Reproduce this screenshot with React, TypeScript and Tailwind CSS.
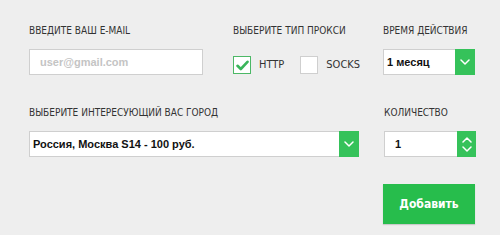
import React from 'react'

const label = "text-[10px] leading-none uppercase text-[#333] whitespace-nowrap"
const narrow = { fontFamily: '"Liberation Sans Narrow", "DejaVu Sans Condensed", sans-serif' }
const arial = { fontFamily: '"Liberation Sans", Arial, sans-serif' }

function Chevron({ up = false }: { up?: boolean }) {
  return (
    <svg width="10" height="6" viewBox="0 0 10 6" fill="none">
      <path d={up ? 'M1 5L5 1L9 5' : 'M1 1L5 5L9 1'} stroke="white" strokeWidth="1.5" strokeLinecap="round" strokeLinejoin="round" />
    </svg>
  )
}

function Select({ value, width }: { value: string; width: string }) {
  return (
    <div className={`${width} h-[26px] flex bg-white border border-[#cfcfcf]`}>
      <div className="flex-1 flex items-center pl-[3px] text-[11px] font-bold text-[#111]" style={arial}>
        {value}
      </div>
      <div className="w-[20px] -my-px -mr-px bg-[#35c25a] flex items-center justify-center">
        <Chevron />
      </div>
    </div>
  )
}

function Checkbox({ checked, text }: { checked: boolean; text: string }) {
  return (
    <div className="flex items-center">
      <div className={`w-[18px] h-[18px] bg-white border flex items-center justify-center ${checked ? 'border-[#4cb866]' : 'border-[#cfcfcf]'}`}>
        {checked && (
          <svg width="13" height="11" viewBox="0 0 13 11">
            <path d="M1.5 5.8L4.8 9L11.5 1.8" stroke="#3ab55a" strokeWidth="2.6" fill="none" strokeLinecap="round" strokeLinejoin="round" />
          </svg>
        )}
      </div>
      <span className="ml-[8px] text-[11px] text-[#333]" style={narrow}>{text}</span>
    </div>
  )
}

export default function App() {
  return (
    <div className="w-[500px] h-[235px] bg-[#eeeeee] pl-[29px] pt-[26px]" style={narrow}>
      <div className="flex">
        <div className="w-[174px]">
          <div className={label}>Введите ваш e-mail</div>
          <div className="mt-[13px] h-[26px] bg-white border border-[#cfcfcf] flex items-center pl-[10px] text-[11px] font-bold text-[#c4c4c4]" style={arial}>
            user@gmail.com
          </div>
        </div>
        <div className="w-[150px] ml-[30px]">
          <div className={label}>Выберите тип прокси</div>
          <div className="mt-[20px] flex items-center gap-[16px]">
            <Checkbox checked text="HTTP" />
            <Checkbox checked={false} text="SOCKS" />
          </div>
        </div>
        <div className="w-[92px]">
          <div className={label}>Время действия</div>
          <div className="mt-[13px]">
            <Select value="1 месяц" width="w-[92px]" />
          </div>
        </div>
      </div>

      <div className="flex mt-[33px]">
        <div className="w-[330px]">
          <div className={label}>Выберите интересующий вас город</div>
          <div className="mt-[13px]">
            <Select value="Россия, Москва S14 - 100 руб." width="w-[330px]" />
          </div>
        </div>
        <div className="w-[92px] ml-[25px]">
          <div className={label}>Количество</div>
          <div className="mt-[13px] h-[26px] flex bg-white border border-[#cfcfcf]">
            <div className="flex-1 flex items-center pl-[10px] text-[11px] font-bold text-[#111]" style={arial}>
              1
            </div>
            <div className="w-[19px] -my-px -mr-px bg-[#35c25a] flex flex-col items-center justify-center gap-[3px]">
              <Chevron up />
              <Chevron />
            </div>
          </div>
        </div>
      </div>

      <div className="flex justify-end pr-[25px] mt-[27px]">
        <button className="w-[92px] h-[40px] bg-[#27bd4c] text-white text-[12px] font-bold shadow-[0_1px_1px_rgba(0,0,0,0.15)]" style={narrow}>
          Добавить
        </button>
      </div>
    </div>
  )
}
